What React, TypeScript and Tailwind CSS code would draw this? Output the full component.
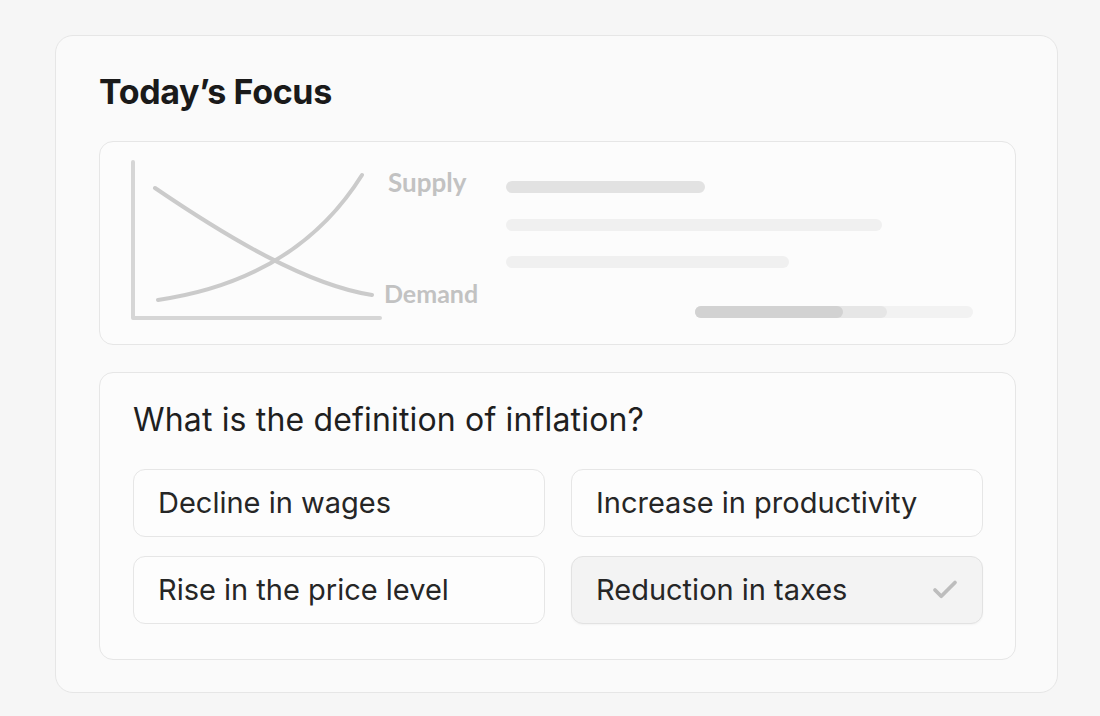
import { Check } from "lucide-react"

const options = [
  { label: "Decline in wages", selected: false },
  { label: "Increase in productivity", selected: false },
  { label: "Rise in the price level", selected: false },
  { label: "Reduction in taxes", selected: true },
]

function SupplyDemandChart() {
  return (
    <svg width="360" height="170" viewBox="0 0 360 170" className="shrink-0">
      {/* axes */}
      <path d="M6 5 L6 161 L253 161" fill="none" stroke="#d6d6d6" strokeWidth="4" strokeLinecap="round" strokeLinejoin="round" />
      {/* supply */}
      <path d="M31 143 C 120 130, 190 90, 235 18" fill="none" stroke="#cbcbcb" strokeWidth="4" strokeLinecap="round" />
      {/* demand */}
      <path d="M28 31 C 100 80, 180 128, 245 138" fill="none" stroke="#cbcbcb" strokeWidth="4" strokeLinecap="round" />
      <text x="261" y="35" fill="#c2c2c2" fontSize="26" fontWeight="700" fontFamily="Lato, 'Liberation Sans', sans-serif">
        Supply
      </text>
      <text x="257" y="146" fill="#c2c2c2" fontSize="25" fontWeight="700" fontFamily="Lato, 'Liberation Sans', sans-serif">
        Demand
      </text>
    </svg>
  )
}

export default function App() {
  return (
    <div className="min-h-screen bg-[#f6f6f6] pl-[55px] pr-[42px] pt-[35px] font-['Inter','Liberation_Sans',sans-serif]">
      <div className="h-[658px] rounded-[18px] border border-[#e6e6e6] bg-[#fafafa] pl-[43px] pr-[41px] pt-[36px]">
        <h1 className="text-[34px] leading-[40px] font-bold tracking-[-0.01em] text-[#1a1a1a]">Today’s Focus</h1>

        {/* Chart card */}
        <div className="mt-[29px] flex h-[204px] rounded-[14px] border border-[#e6e6e6] bg-[#fcfcfc] pl-[27px] pt-[15px]">
          <SupplyDemandChart />
          <div className="flex flex-1 flex-col pl-[19px] pt-[24px]">
            <div className="h-3 w-[199px] rounded-full bg-[#e2e2e2]" />
            <div className="mt-[26px] h-3 w-[376px] rounded-full bg-[#f0f0f0]" />
            <div className="mt-[25px] h-3 w-[283px] rounded-full bg-[#f0f0f0]" />
            <div className="ml-[189px] mt-[38px] h-3 w-[278px] rounded-full bg-[#f2f2f2]">
              <div className="h-full w-[192px] rounded-full bg-[#e6e6e6]">
                <div className="h-full w-[148px] rounded-full bg-[#d2d2d2]" />
              </div>
            </div>
          </div>
        </div>

        {/* Question card */}
        <div className="mt-[27px] rounded-[14px] border border-[#e6e6e6] bg-[#fcfcfc] pb-[35px] pl-[33px] pr-[32px] pt-[29px]">
          <p className="text-[32px] leading-[36px] tracking-[0.005em] text-[#1f1f1f]">What is the definition of inflation?</p>
          <div className="mt-[31px] grid grid-cols-2 gap-x-[26px] gap-y-[19px]">
            {options.map((option) => (
              <div
                key={option.label}
                className={`flex h-[68px] items-center justify-between rounded-[12px] border pl-[24px] pr-[22px] ${
                  option.selected
                    ? "border-[#e2e2e2] bg-[#f3f3f3] shadow-[0_1px_2px_rgba(0,0,0,0.04)]"
                    : "border-[#e6e6e6] bg-[#fdfdfd]"
                }`}
              >
                <span className="text-[29px] leading-[32px] text-[#262626]">{option.label}</span>
                {option.selected && <Check className="h-[30px] w-[30px] text-[#bdbdbd]" strokeWidth={3} />}
              </div>
            ))}
          </div>
        </div>
      </div>
    </div>
  )
}
